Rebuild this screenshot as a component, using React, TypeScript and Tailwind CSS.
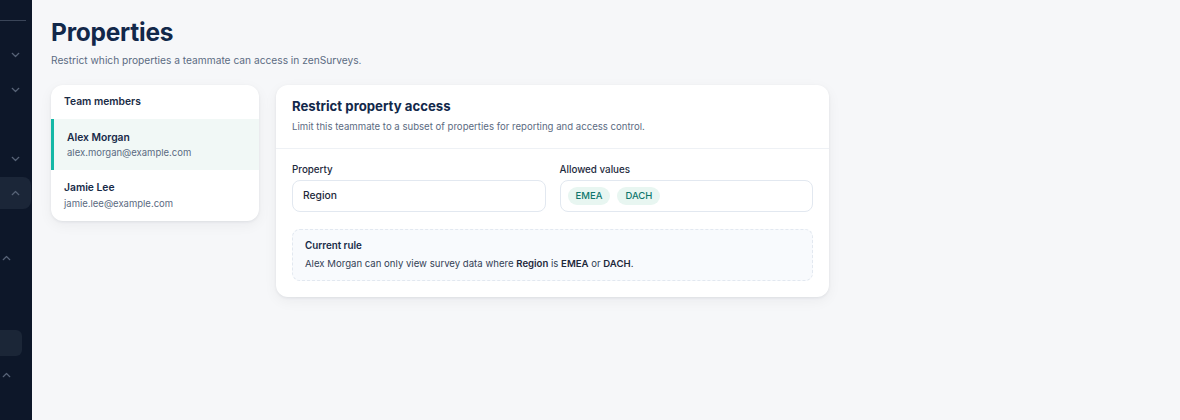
import React from 'react';

function ChevronDown() {
    return (
        <svg width="9" height="6" viewBox="0 0 9 6" fill="none" stroke="#576377" strokeWidth="1.2" strokeLinecap="round" strokeLinejoin="round">
            <path d="M1.2 1.3l3.3 3.2 3.3-3.2" />
        </svg>
    );
}

function ChevronUp() {
    return (
        <svg width="9" height="6" viewBox="0 0 9 6" fill="none" stroke="#576377" strokeWidth="1.2" strokeLinecap="round" strokeLinejoin="round">
            <path d="M1.2 4.7l3.3-3.2 3.3 3.2" />
        </svg>
    );
}

function Sidebar() {
    return (
        <aside className="w-8 shrink-0 bg-[#0d1729] overflow-hidden flex flex-col">
            <div className="mt-5 h-px w-[26px] bg-[#3a4558]" />
            <div className="mt-[17px] h-[34px] flex items-center pl-[11px]"><ChevronDown /></div>
            <div className="mt-px h-[34px] flex items-center pl-[11px]"><ChevronDown /></div>
            <div className="mt-[35px] h-[34px] flex items-center pl-[11px]"><ChevronDown /></div>
            <div className="mt-px h-8 w-[31px] rounded-r-lg bg-[#1b2638] flex items-center pl-[11px]"><ChevronUp /></div>
            <div className="mt-8 h-[34px] flex items-center pl-[2px]"><ChevronUp /></div>
            <div className="mt-[55px] h-[26px] w-[22px] rounded-r-md bg-[#1b2637]" />
            <div className="mt-[2px] h-[34px] flex items-center pl-[2px]"><ChevronUp /></div>
        </aside>
    );
}

function TeamMembers() {
    return (
        <div className="w-[208px] shrink-0 self-start bg-white rounded-xl shadow-[0_1px_3px_rgba(15,23,42,0.07),0_4px_14px_rgba(15,23,42,0.05)] overflow-hidden">
            <div className="h-[34px] px-[13px] flex items-center text-[10.3px] font-semibold text-[#1a2b45]">Team members</div>
            <div className="border-l-[3px] border-[#14b8a6] bg-[#f1f8f6] pl-[13px] pt-[10px] pb-[9px]">
                <div className="text-[10.3px] leading-4 font-semibold text-[#172a48]">Alex Morgan</div>
                <div className="text-[9.5px] leading-4 text-[#5b6b82]">alex.morgan@example.com</div>
            </div>
            <div className="px-[13px] pt-[9px] pb-[9px]">
                <div className="text-[10.3px] leading-4 font-semibold text-[#172a48]">Jamie Lee</div>
                <div className="mt-px text-[9.5px] leading-4 text-[#5b6b82]">jamie.lee@example.com</div>
            </div>
        </div>
    );
}

function Chip({ label }: { label: string }) {
    return (
        <span className="h-[18px] px-[8px] rounded-full bg-[#e8f6f1] text-[9.5px] font-medium text-[#0f766e] flex items-center">{label}</span>
    );
}

function RestrictCard() {
    return (
        <div className="w-[553px] shrink-0 self-start bg-white rounded-xl shadow-[0_1px_3px_rgba(15,23,42,0.07),0_4px_14px_rgba(15,23,42,0.05)]">
            <div className="px-4 pt-[11px] pb-[13px] border-b border-[#eef1f5]">
                <h2 className="text-[13.2px] leading-5 font-bold text-[#12284a]">Restrict property access</h2>
                <p className="mt-[3px] text-[9.6px] leading-4 text-[#5b6b82]">Limit this teammate to a subset of properties for reporting and access control.</p>
            </div>
            <div className="px-4 pt-[14px] pb-4">
                <div className="grid grid-cols-2 gap-[14px]">
                    <div>
                        <div className="text-[9.8px] leading-[14px] font-medium text-[#1e2a3d]">Property</div>
                        <div className="mt-[3px] h-8 rounded-lg border border-[#e2e8f0] px-[10px] flex items-center text-[10.3px] font-medium text-[#1e293b]">Region</div>
                    </div>
                    <div>
                        <div className="text-[9.8px] leading-[14px] font-medium text-[#1e2a3d]">Allowed values</div>
                        <div className="mt-[3px] h-8 rounded-lg border border-[#e2e8f0] px-[7px] flex items-center gap-[7px]">
                            <Chip label="EMEA" />
                            <Chip label="DACH" />
                        </div>
                    </div>
                </div>
                <div className="mt-[17px] h-[52px] rounded-lg border border-dashed border-[#e2e8f0] bg-[#f8fafd] px-[12px] pt-[8px]">
                    <div className="text-[9.8px] leading-4 font-semibold text-[#172a48]">Current rule</div>
                    <div className="mt-[2px] text-[9.6px] leading-4 text-[#334155]">
                        Alex Morgan can only view survey data where <b className="font-semibold text-[#1e293b]">Region</b> is <b className="font-semibold text-[#1e293b]">EMEA</b> or <b className="font-semibold text-[#1e293b]">DACH</b>.
                    </div>
                </div>
            </div>
        </div>
    );
}

export default function App() {
    return (
        <div className="w-[1180px] h-[420px] flex overflow-hidden font-['Inter',sans-serif]">
            <Sidebar />
            <main className="flex-1 bg-[#f6f7f9] pl-[19px] pt-[16px]">
                <h1 className="text-[24.5px] leading-8 font-bold text-[#12284a] tracking-[-0.01em]">Properties</h1>
                <p className="mt-[4px] text-[10.2px] leading-4 text-[#5b6b82]">Restrict which properties a teammate can access in zenSurveys.</p>
                <div className="mt-[17px] flex gap-[17px]">
                    <TeamMembers />
                    <RestrictCard />
                </div>
            </main>
        </div>
    );
}
